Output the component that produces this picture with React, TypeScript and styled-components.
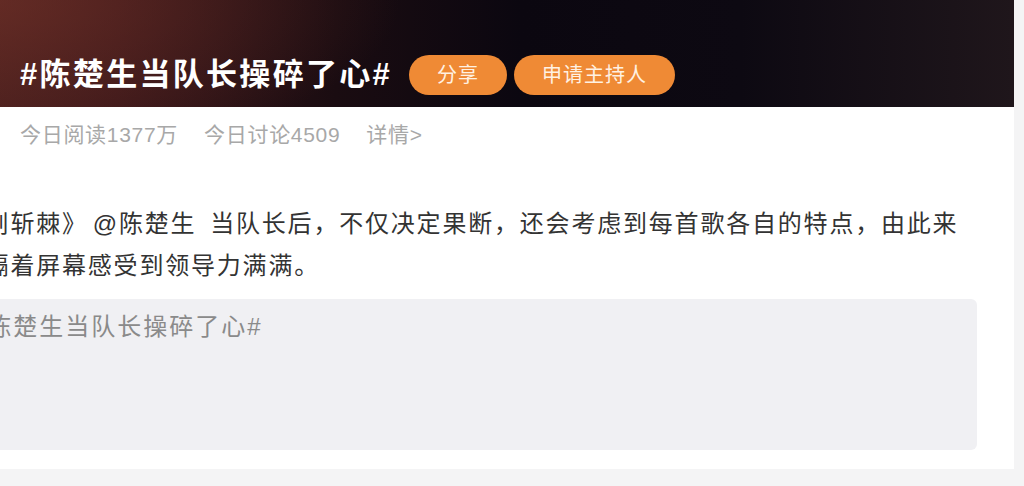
import styled, { createGlobalStyle } from 'styled-components';

const GlobalStyle = createGlobalStyle`
  html, body {
    margin: 0;
    padding: 0;
    background: #f4f4f5;
    overflow: hidden;
  }
  #root {
    width: 1024px;
    height: 486px;
    overflow: hidden;
  }
`;

const FONT = `"Liberation Sans", "Noto Sans CJK SC", sans-serif`;

export default function App() {
  return (
    <>
      <GlobalStyle />
      <Card>
        <Header>
          <Title>#陈楚生当队长操碎了心#</Title>
          <Pill>分享</Pill>
          <Pill>申请主持人</Pill>
        </Header>
        <Stats>
          <Stat>今日阅读1377万</Stat>
          <Stat>今日讨论4509</Stat>
          <Stat>详情&gt;</Stat>
        </Stats>
        <Body>
          <Paragraph>
            <ShowName>《披荆斩棘》</ShowName>@陈楚生{'\u2002'}当队长后，不仅决定果断，还会考虑到每首歌各自的特点，由此来
            <br />
            让人隔着屏幕感受到领导力满满。
          </Paragraph>
          <Composer>
            <Placeholder>#陈楚生当队长操碎了心#</Placeholder>
          </Composer>
        </Body>
      </Card>
    </>
  );
}

const Card = styled.div`
  margin-left: -80px;
  width: 1094px;
  background: #fff;
  font-family: ${FONT};
`;

const Header = styled.div`
  height: 107px;
  box-sizing: border-box;
  display: flex;
  align-items: flex-end;
  padding: 0 0 12px 100px;
  background:
    radial-gradient(ellipse 420px 160px at 60px 0px, rgba(120, 52, 42, 0.6), rgba(120, 52, 42, 0) 100%),
    linear-gradient(to right, #4e221f 0%, #3a1719 18%, #1a0c11 38%, #0b0710 55%, #0d0912 75%, #1f161b 100%);
`;

const Title = styled.h1`
  margin: 0 17px 0 0;
  font-size: 31px;
  font-weight: bold;
  letter-spacing: 2.3px;
  color: #fff;
  line-height: 40px;
  white-space: nowrap;
`;

const Pill = styled.span`
  height: 40px;
  line-height: 40px;
  padding: 0 28px;
  margin-right: 7px;
  border-radius: 20px;
  background: #ef8a35;
  color: #fff1e2;
  font-size: 20px;
  letter-spacing: 1px;
  white-space: nowrap;
`;

const Stats = styled.div`
  display: flex;
  gap: 26px;
  padding: 6px 0 0 100px;
  height: 40px;
  align-items: center;
`;

const Stat = styled.span`
  font-size: 21px;
  letter-spacing: 0.7px;
  color: #a8a8a8;
  white-space: nowrap;
`;

const Body = styled.div`
  padding: 50px 37px 19px 13px;
`;

const Paragraph = styled.p`
  margin: 0;
  font-size: 24px;
  letter-spacing: 1.8px;
  line-height: 42px;
  color: #333;
  white-space: nowrap;
`;

const ShowName = styled.span`
  margin-right: 5px;
`;

const Composer = styled.div`
  margin: 12px 0 0 27px;
  height: 151px;
  box-sizing: border-box;
  padding: 12px 12px;
  border-radius: 6px;
  background: #f0f0f3;
`;

const Placeholder = styled.div`
  font-size: 24px;
  letter-spacing: 2px;
  line-height: 32px;
  color: #8a8a8a;
  white-space: nowrap;
`;
